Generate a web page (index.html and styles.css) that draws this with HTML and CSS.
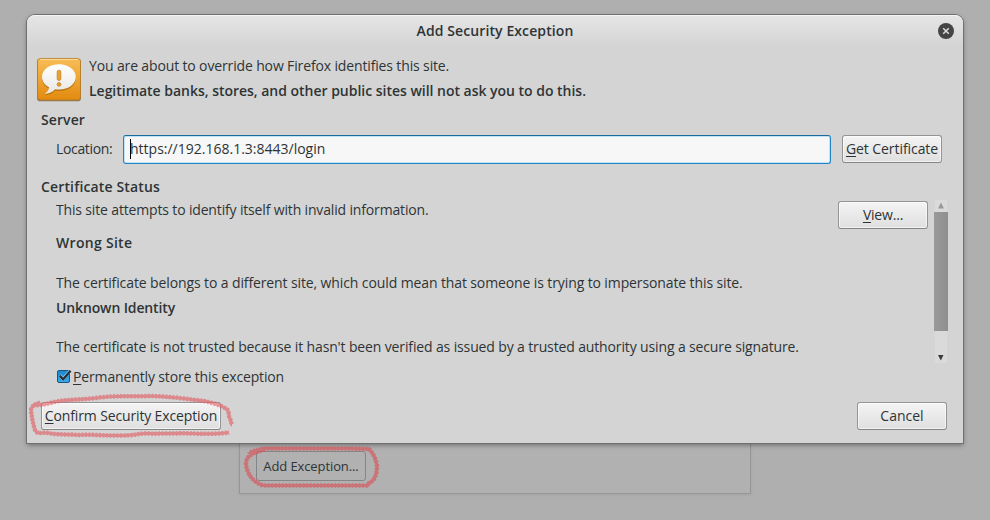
FILE: index.html
```html
<!DOCTYPE html>
<html lang="en">
<head>
<meta charset="utf-8">
<title>Add Security Exception</title>
<link rel="stylesheet" href="styles.css">
</head>
<body>
<section class="page-panel"><button class="btn btn-flat"><span class="t-add">Add Exception...</span></button></section>
<main class="dialog">
  <header class="titlebar">
    <h1><span class="t-title">Add Security Exception</span></h1>
    <svg class="close" width="16" height="16" viewBox="0 0 16 16"><circle cx="8" cy="8" r="8" fill="#454545"/><path d="M5.2 5.2l5.6 5.6M10.800 5.200l-5.600 5.600" stroke="#dedede" stroke-width="1.500"/></svg>
  </header>
  <div class="intro">
    <svg class="warn" width="46" height="45" viewBox="0 0 46 46" preserveAspectRatio="none">
      <defs>
        <linearGradient id="orange" x2="0" y2="1"><stop offset="0" stop-color="#f8bd57"/><stop offset="1" stop-color="#e28a0e"/></linearGradient>
        <linearGradient id="bubble" x2="0" y2="1"><stop offset="0" stop-color="#fff"/><stop offset="1" stop-color="#e9e7e3"/></linearGradient>
      </defs>
      <rect x="1" y="1.8" width="44" height="43.5" rx="3.5" fill="#6b5a3f" opacity=".75"/>
      <rect x="1.5" y="1.5" width="43" height="42.5" rx="3" fill="url(#orange)" stroke="#b67b25" stroke-width=".8"/>
      <path d="M4 2.500h38" stroke="#fbdc9f"/>
      <path d="M23 8C13.500 8 6 13.500 6 21c0 4.500 2.500 8 7 10.500 0 3-1.800 5-4.500 6.500 4.500 0 8-1.500 10.500-4.500 1.300.2 2.600.3 4 .3 9.500 0 16.800-5.500 16.800-12.800S32.500 8 23 8z" transform="translate(0 1)" fill="#8b5200" opacity=".45"/>
      <path d="M23 7.500C13.500 7.500 6 13 6 20.500c0 4.500 2.500 8 7 10.500 0 3-1.800 5-4.500 6.500 4.500 0 8-1.500 10.500-4.500 1.300.2 2.600.3 4 .3 9.500 0 16.800-5.500 16.800-12.800S32.500 7.500 23 7.500z" fill="url(#bubble)"/>
      <rect x="21.200" y="13.500" width="3.600" height="10.500" rx="1.700" fill="#eda02b" stroke="#b8791c" stroke-width=".7"/>
      <circle cx="23" cy="28" r="1.900" fill="#eda02b" stroke="#b8791c" stroke-width=".7"/>
    </svg>
    <div class="intro-text"><p><span class="t-over">You are about to override how Firefox identifies this site.</span></p><p class="bold"><span class="t-legit">Legitimate banks, stores, and other public sites will not ask you to do this.</span></p></div>
  </div>
  <h2 class="server"><span class="t-server">Server</span></h2>
  <div class="location">
    <label><span class="t-loc">Location:</span></label>
    <div class="field"><i class="caret"></i><span class="t-url">https://192.168.1.3:8443/login</span></div>
    <button class="btn get"><span class="t-get"><u>G</u>et Certificate</span></button>
  </div>
  <h2 class="status-title"><span class="t-cs">Certificate Status</span></h2>
  <div class="status">
    <div class="details">
      <p><span class="t-att">This site attempts to identify itself with invalid information.</span></p>
      <h3><span class="t-wrong">Wrong Site</span></h3>
      <p class="reason"><span class="t-bel">The certificate belongs to a different site, which could mean that someone is trying to impersonate this site.</span></p>
      <h3 class="second"><span class="t-unk">Unknown Identity</span></h3>
      <p class="reason last"><span class="t-tru">The certificate is not trusted because it hasn't been verified as issued by a trusted authority using a secure signature.</span></p>
    </div>
    <button class="btn view"><span class="t-view"><u>V</u>iew...</span></button>
    <div class="scrollbar">
      <svg width="12" height="12" viewBox="0 0 12 12"><path d="M6 2.500l3 6H3z" fill="#999"/></svg>
      <div class="thumb"></div>
      <svg class="down" width="12" height="12" viewBox="0 0 12 12"><path d="M3 4h5.500l-2.700 5.500z" fill="#3a3a3a"/></svg>
    </div>
  </div>
  <label class="store">
    <svg width="16" height="16" viewBox="0 0 16 16"><defs><linearGradient id="blue" x2="0" y2="1"><stop offset="0" stop-color="#1d86cb"/><stop offset="1" stop-color="#35aaf0"/></linearGradient></defs><rect x="1.500" y="1.500" width="12" height="12" rx="1.500" fill="url(#blue)" stroke="#1c567e"/><path d="M4 6.500l3 3.500 7-8" fill="none" stroke="#8bd0f8" stroke-width="3.200"/><path d="M3.800 6.800l3.300 3.500 7.500-8.500" fill="none" stroke="#2b2f32" stroke-width="2.200"/></svg>
    <span class="t-perm"><u>P</u>ermanently store this exception</span>
  </label>
  <footer><button class="btn confirm"><span class="t-conf"><u>C</u>onfirm Security Exception</span></button><button class="btn cancel"><span class="t-can">Cancel</span></button></footer>
</main>
<svg class="marks" width="990" height="520" viewBox="0 0 990 520">
  <defs>
    <path id="ring-a" d="M33 405.500C42 405 47 404 54 402C68 399 80 400 96 398C116 395 128 397 147 396C165 396 180 398 196 400C208 401 220 405 226 408.500C230 411 228 416 230 419C232 422 231 425 232 425M40 402.500C33 405 31 407 31 411C32 418 33 424 35 430C37 435 42 432 48 433C56 435 68 434 79 435C94 434 105 436 120 435.500C132 436 135 434 145 433.500C160 434 177 433 193 433.500C204 434 220 434 229 432.500"/>
    <path id="ring-b" d="M265 449.500C252 453 246 456 246 464C247 474 253 482 263 485.500H368L369 483C376 480 377 472 377 466C376 459 373 453 369 449L350 448.500H264C257 450 251 451 249 454"/>
  </defs>
  <g class="chalk light"><use href="#ring-a"/><use class="grain" href="#ring-a"/></g>
  <g class="chalk dark"><use href="#ring-b"/><use class="grain" href="#ring-b"/></g>
</svg>
</body>
</html>
```
FILE: styles.css
```css
*{box-sizing:border-box}
body{margin:0;width:990px;height:520px;overflow:hidden;position:relative;background:#afafaf;color:#2e3436;font:14px/20px "Open Sans",sans-serif}
h1,h2,h3,p{margin:0;font-size:14px}
h1,h2,h3,.bold{font-weight:600}
p{font-weight:400}
span{white-space:nowrap}
u{text-underline-offset:2px}
.dialog{position:absolute;left:27px;top:15px;width:936px;height:428px;background:#d4d4d4;border-radius:8px 8px 0 0;box-shadow:0 0 0 1px #707070,0 2px 5px #0006}
.titlebar{height:32px;display:flex;justify-content:center;align-items:center;padding-bottom:1px;background:linear-gradient(#e5e5e5,#d4d4d4);border-radius:8px 8px 0 0;border-top:1px solid #f5f5f5;position:relative}
.close{position:absolute;right:9px;top:7px}
.intro{display:flex;margin:7px 0 0 9px;gap:7px;height:49px}
.warn{margin-top:3px}
.intro-text{display:flex;flex-direction:column;gap:1px;line-height:24px}
h2{margin-left:14px;line-height:24px}
.server{margin-top:5px}
.location{display:flex;margin:3px 21px 0 29px;height:29px}
.location label{width:67px;line-height:27px}
.field{flex:1;height:29px;border:1px solid #1f87c5;border-top-color:#1c6b9c;border-radius:3px;background:#f7f7f7;box-shadow:inset 0 0 0 1px #bfe2f7;display:flex;align-items:center;padding:0 0 1px 6px}
.t-url{line-height:20px}
.caret{width:1px;height:20px;background:#000;margin-right:-1px}
.btn{height:28px;padding:0 0 1px;border:1px solid #949494;border-bottom-color:#858585;border-radius:3px;background:linear-gradient(#f4f4f4,#dfdfdf);box-shadow:inset 0 0 0 1px #fff9;font:inherit;color:#2e3436;display:flex;align-items:center;justify-content:center}
.get{width:100px;margin-left:11px}
.status-title{margin-top:11px}
.status{display:flex;height:165px;margin:0 15px 0 29px}
.details{flex:1;min-width:0;padding-top:1px}
.details h3{margin-top:13px}
.reason{margin-top:20px}
.details .second{margin-top:5px}
.details .last{margin-top:19px}
.view{width:90px;margin:2px 6px 0 0}
.scrollbar{width:14px;height:163px;margin-top:1px;background:linear-gradient(#dadada,#dadada) center/12px 100% no-repeat;display:flex;flex-direction:column;align-items:center}
.thumb{width:14px;height:119px;background:linear-gradient(90deg,#999,#8f8f8f)}
.down{margin-top:auto}
.store{display:flex;height:20px;align-items:center;margin:3px 0 0 29px;gap:1px}
footer{display:flex;justify-content:space-between;margin:15px 16px 0 14px}
.confirm{width:180px}
.cancel{width:90px}
.page-panel{position:absolute;left:239px;top:430px;width:512px;height:64px;border:1px solid #969696;background:#b1b1b1;padding:20px 0 0 16px;box-shadow:0 1px 3px #0001}
.btn-flat{width:110px;height:30px;background:#b1b1b1;border-color:#858585;box-shadow:none;font-size:13px}
.marks{position:absolute;left:0;top:0;pointer-events:none}
.chalk{fill:none;stroke-width:3;stroke-linejoin:round}
.grain{stroke-width:4.5;stroke-dasharray:2 1.5}
.light{stroke:#e25f66;opacity:.64}
.dark{stroke:#d8555b;opacity:.66}
.t-title{letter-spacing:.1px}
.t-over{letter-spacing:-.14px}
.t-legit{letter-spacing:-.02px}
.t-server{letter-spacing:.1px}
.t-loc{letter-spacing:-.35px}
.t-get{letter-spacing:-.07px}
.t-cs{letter-spacing:.15px}
.t-att{letter-spacing:-.157px}
.t-wrong{letter-spacing:.3px}
.t-bel{letter-spacing:-.112px}
.t-unk{letter-spacing:-.13px}
.t-tru{letter-spacing:-.134px}
.t-perm{letter-spacing:-.14px}
.t-conf{letter-spacing:-.14px}
.t-view{letter-spacing:-.2px}
.t-add{letter-spacing:-.1px}
```
